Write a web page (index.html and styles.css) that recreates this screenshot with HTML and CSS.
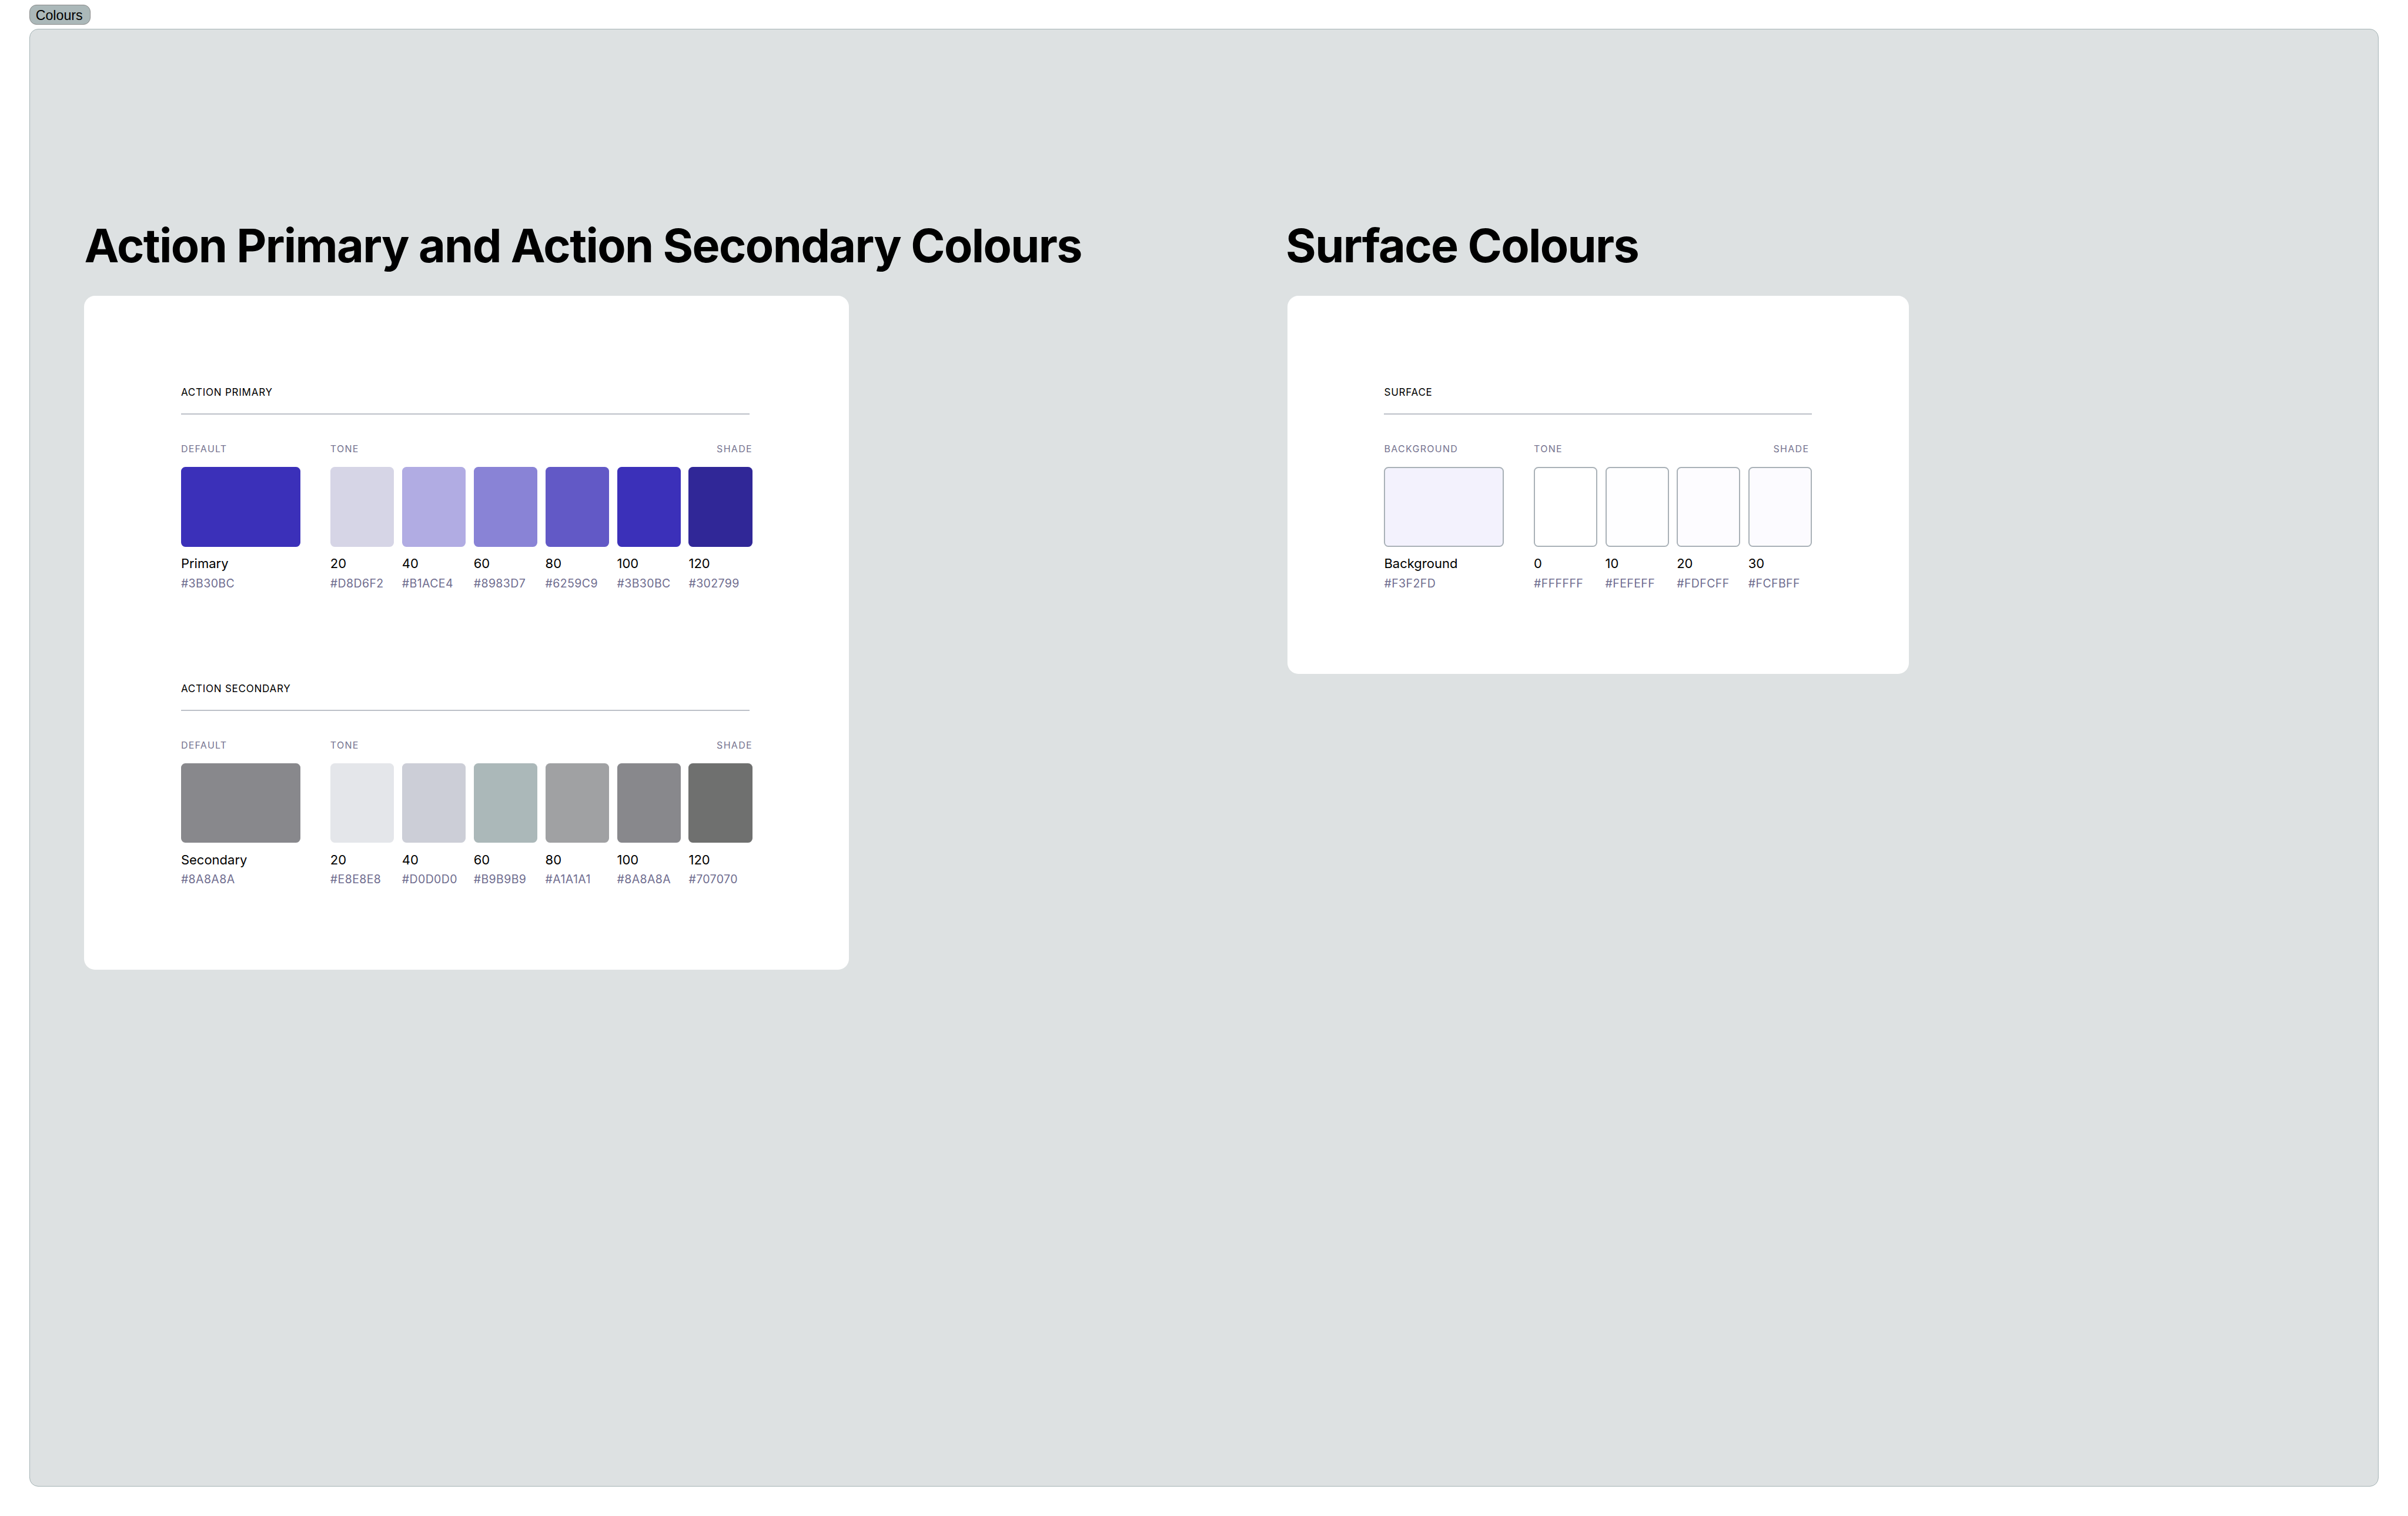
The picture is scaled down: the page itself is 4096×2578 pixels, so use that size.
FILE: index.html
```html
<!DOCTYPE html>
<html lang="en">
<head>
<meta charset="utf-8">
<title>Colours</title>
<link rel="stylesheet" href="styles.css">
</head>
<body>
<div class="tag">Colours</div>
<main class="canvas">
  <section class="column">
    <h1 class="heading">Action Primary and Action Secondary Colours</h1>
    <div class="card card-action">
      <div class="ramp">
        <h2 class="ramp-title ramp-title-short">ACTION PRIMARY</h2>
        <div class="palette">
          <div class="group-default">
            <div class="group-head"><span>DEFAULT</span></div>
            <div class="swatch c-3b30bc"></div>
            <div class="name">Primary</div>
            <div class="hex">#3B30BC</div>
          </div>
          <div class="group-tones tones-6">
            <div class="group-head"><span>TONE</span><span>SHADE</span></div>
            <div class="tone-grid">
              <div><div class="swatch c-d8d6f2"></div><div class="name">20</div><div class="hex">#D8D6F2</div></div>
              <div><div class="swatch c-b1ace4"></div><div class="name">40</div><div class="hex">#B1ACE4</div></div>
              <div><div class="swatch c-8983d7"></div><div class="name">60</div><div class="hex">#8983D7</div></div>
              <div><div class="swatch c-6259c9"></div><div class="name">80</div><div class="hex">#6259C9</div></div>
              <div><div class="swatch c-3b30bc"></div><div class="name">100</div><div class="hex">#3B30BC</div></div>
              <div><div class="swatch c-302799"></div><div class="name">120</div><div class="hex">#302799</div></div>
            </div>
          </div>
        </div>
      </div>
      <div class="ramp">
        <h2 class="ramp-title ramp-title-short">ACTION SECONDARY</h2>
        <div class="palette">
          <div class="group-default">
            <div class="group-head"><span>DEFAULT</span></div>
            <div class="swatch c-8a8a8a"></div>
            <div class="name">Secondary</div>
            <div class="hex">#8A8A8A</div>
          </div>
          <div class="group-tones tones-6">
            <div class="group-head"><span>TONE</span><span>SHADE</span></div>
            <div class="tone-grid">
              <div><div class="swatch c-e8e8e8"></div><div class="name">20</div><div class="hex">#E8E8E8</div></div>
              <div><div class="swatch c-d0d0d0"></div><div class="name">40</div><div class="hex">#D0D0D0</div></div>
              <div><div class="swatch c-b9b9b9"></div><div class="name">60</div><div class="hex">#B9B9B9</div></div>
              <div><div class="swatch c-a1a1a1"></div><div class="name">80</div><div class="hex">#A1A1A1</div></div>
              <div><div class="swatch c-8a8a8a"></div><div class="name">100</div><div class="hex">#8A8A8A</div></div>
              <div><div class="swatch c-707070"></div><div class="name">120</div><div class="hex">#707070</div></div>
            </div>
          </div>
        </div>
      </div>
    </div>
  </section>
  <section class="column">
    <h1 class="heading heading-surface">Surface Colours</h1>
    <div class="card card-surface">
      <div class="ramp">
        <h2 class="ramp-title">SURFACE</h2>
        <div class="palette">
          <div class="group-default">
            <div class="group-head"><span>BACKGROUND</span></div>
            <div class="swatch outlined c-f3f2fd"></div>
            <div class="name">Background</div>
            <div class="hex">#F3F2FD</div>
          </div>
          <div class="group-tones tones-4">
            <div class="group-head"><span>TONE</span><span>SHADE</span></div>
            <div class="tone-grid">
              <div><div class="swatch outlined c-ffffff"></div><div class="name">0</div><div class="hex">#FFFFFF</div></div>
              <div><div class="swatch outlined c-fefeff"></div><div class="name">10</div><div class="hex">#FEFEFF</div></div>
              <div><div class="swatch outlined c-fdfcff"></div><div class="name">20</div><div class="hex">#FDFCFF</div></div>
              <div><div class="swatch outlined c-fcfbff"></div><div class="name">30</div><div class="hex">#FCFBFF</div></div>
            </div>
          </div>
        </div>
      </div>
    </div>
  </section>
</main>
</body>
</html>
```
FILE: styles.css
```css
* { box-sizing: border-box; }
html, body { margin: 0; height: 100%; }
body {
  background: #fff;
  display: flex;
  flex-direction: column;
  align-items: flex-start;
  padding: 7.6px 50px 50.5px 49.9px;
  font-family: Inter, "Liberation Sans", sans-serif;
  color: #000;
}
.tag {
  width: 103.9px;
  height: 34.2px;
  flex: none;
  padding: 3.5px 0 0 9.8px;
  margin-bottom: 7.6px;
  background: #abb8b9;
  border: 1px solid #8a8a8a;
  border-radius: 12px;
  font-family: "Liberation Sans", Arial, sans-serif;
  font-size: 23.2px;
  line-height: 28.3px;
}
.canvas {
  align-self: stretch;
  flex: 1;
  display: grid;
  grid-template-columns: 2046.6px 1fr;
  align-items: start;
  padding: 318.45px 0 0 92.6px;
  background: #dde1e2;
  border: 1px solid #a5b3b5;
  border-radius: 15px;
}
.heading {
  margin: 0 0 38.15px;
  font-size: 79px;
  line-height: 96px;
  font-weight: 700;
  letter-spacing: -0.021em;
  white-space: nowrap;
}
.heading-surface { margin-left: -3px; }
.card {
  background: #fff;
  border-radius: 18.5px;
  padding: 152.4px 164.4px 141.2px;
  display: flex;
  flex-direction: column;
  gap: 154.4px;
}
.card-action { width: 1301px; }
.card-surface { width: 1056.8px; }
.ramp-title {
  margin: 0 0 47.6px;
  padding-bottom: 24px;
  border-bottom: 2px solid #bcc0c8;
  font-size: 17px;
  line-height: 24px;
  font-weight: 400;
  letter-spacing: 0.045em;
}
.ramp-title-short { margin-right: 5.6px; }
.palette {
  display: flex;
  gap: 50.8px;
}
.group-default { width: 203.2px; flex: none; }
.group-tones { flex: none; }
.tones-6 { width: 718px; }
.tones-4 { width: 472.8px; margin-left: 0.6px; }
.tones-4 .group-head { padding-right: 4.5px; }
.group-head {
  display: flex;
  justify-content: space-between;
  height: 20px;
  margin-bottom: 21px;
  font-size: 16px;
  line-height: 20px;
  letter-spacing: 0.08em;
  color: #75738f;
}
.tone-grid {
  display: grid;
  grid-auto-flow: column;
  grid-auto-columns: 1fr;
  gap: 13.5px;
}
.swatch {
  height: 135.6px;
  border-radius: 7.5px;
}
.outlined { border: 2px solid #a9b1b7; }
.name {
  margin-top: 13.9px;
  font-size: 22px;
  line-height: 30px;
  white-space: nowrap;
}
.hex {
  margin-top: 5.2px;
  font-size: 19.5px;
  line-height: 26px;
  letter-spacing: 0.02em;
  color: #6f6d8f;
  white-space: nowrap;
}
.c-3b30bc { background: #3b30b9; }
.c-d8d6f2 { background: #d6d5e6; }
.c-b1ace4 { background: #b1ace3; }
.c-8983d7 { background: #8983d6; }
.c-6259c9 { background: #6259c6; }
.c-302799 { background: #302797; }
.c-8a8a8a { background: #88888c; }
.c-e8e8e8 { background: #e4e6ea; }
.c-d0d0d0 { background: #ccced7; }
.c-b9b9b9 { background: #abb8b9; }
.c-a1a1a1 { background: #a0a1a3; }
.c-707070 { background: #6f706f; }
.c-f3f2fd { background: #f3f2fd; }
.c-ffffff { background: #ffffff; }
.c-fefeff { background: #fefeff; }
.c-fdfcff { background: #fdfcff; }
.c-fcfbff { background: #fcfbff; }
```
